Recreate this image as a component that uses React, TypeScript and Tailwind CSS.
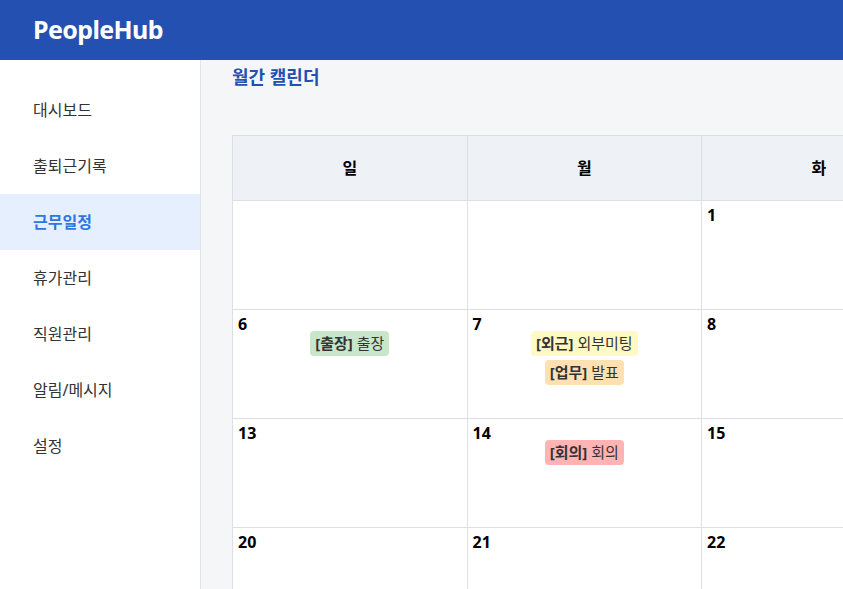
import React from "react";

const menu = ["대시보드", "출퇴근기록", "근무일정", "휴가관리", "직원관리", "알림/메시지", "설정"];

const days = ["일", "월", "화", "수", "목", "금", "토"];

type Ev = { tag: string; title: string; color: string };

// 날짜별 일정
const events: Record<number, Ev[]> = {
  6: [{ tag: "출장", title: "출장", color: "bg-[#c8e6c9]" }],
  7: [
    { tag: "외근", title: "외부미팅", color: "bg-[#fff9c4]" },
    { tag: "업무", title: "발표", color: "bg-[#ffe0b2]" },
  ],
  14: [{ tag: "회의", title: "회의", color: "bg-[#ffb3b3]" }],
};

const weeks: (number | null)[][] = [
  [null, null, 1, 2, 3, 4, 5],
  [6, 7, 8, 9, 10, 11, 12],
  [13, 14, 15, 16, 17, 18, 19],
  [20, 21, 22, 23, 24, 25, 26],
  [27, 28, 29, 30, null, null, null],
];

export default function App() {
  const active = "근무일정";
  return (
    <div
      className="h-screen overflow-hidden flex flex-col text-[#333]"
      style={{ fontFamily: '"Noto Sans", "Noto Sans CJK KR", sans-serif' }}
    >
      {/* header */}
      <header className="h-[60px] shrink-0 bg-[#2350b1] flex items-center px-[33px]">
        <h1 className="text-white text-[25px] font-bold tracking-tight">PeopleHub</h1>
      </header>

      <div className="flex flex-1 min-h-0">
        {/* sidebar */}
        <nav className="w-[201px] shrink-0 bg-white border-r border-[#e2e4e8] pt-[22px]">
          {menu.map((m) => (
            <div
              key={m}
              className={`h-[56px] flex items-center px-[33px] text-[16px] ${
                m === active ? "bg-[#e5effd] text-[#2b78e4] font-bold" : "text-[#333]"
              }`}
            >
              {m}
            </div>
          ))}
        </nav>

        {/* main */}
        <main className="flex-1 min-w-0 bg-[#f5f6f8] px-[31px] pt-[3px]">
          <h2 className="text-[18px] font-bold text-[#2350b1] leading-[28px]">월간 캘린더</h2>

          <table className="mt-[44px] border-collapse table-fixed w-[1642px] bg-white">
            <thead>
              <tr>
                {days.map((d) => (
                  <th
                    key={d}
                    className="w-[234.5px] h-[65px] border border-[#dcdfe3] bg-[#eef2f7] text-[16px] font-bold text-black"
                  >
                    {d}
                  </th>
                ))}
              </tr>
            </thead>
            <tbody>
              {weeks.map((w, i) => (
                <tr key={i}>
                  {w.map((n, j) => (
                    <td key={j} className="h-[109px] border border-[#dcdfe3] align-top px-[5px] pt-[5px]">
                      {n && (
                        <div className="text-[16px] font-bold text-black leading-[18px]">{n}</div>
                      )}
                      <div className="flex flex-col items-center gap-[4px] mt-[-2px]">
                        {n &&
                          (events[n] || []).map((e) => (
                            <span
                              key={e.tag}
                              className={`${e.color} rounded-[4px] px-[5px] py-[3px] text-[15px] leading-[19px] text-[#333]`}
                            >
                              <b>[{e.tag}]</b> {e.title}
                            </span>
                          ))}
                      </div>
                    </td>
                  ))}
                </tr>
              ))}
            </tbody>
          </table>
        </main>
      </div>
    </div>
  );
}
